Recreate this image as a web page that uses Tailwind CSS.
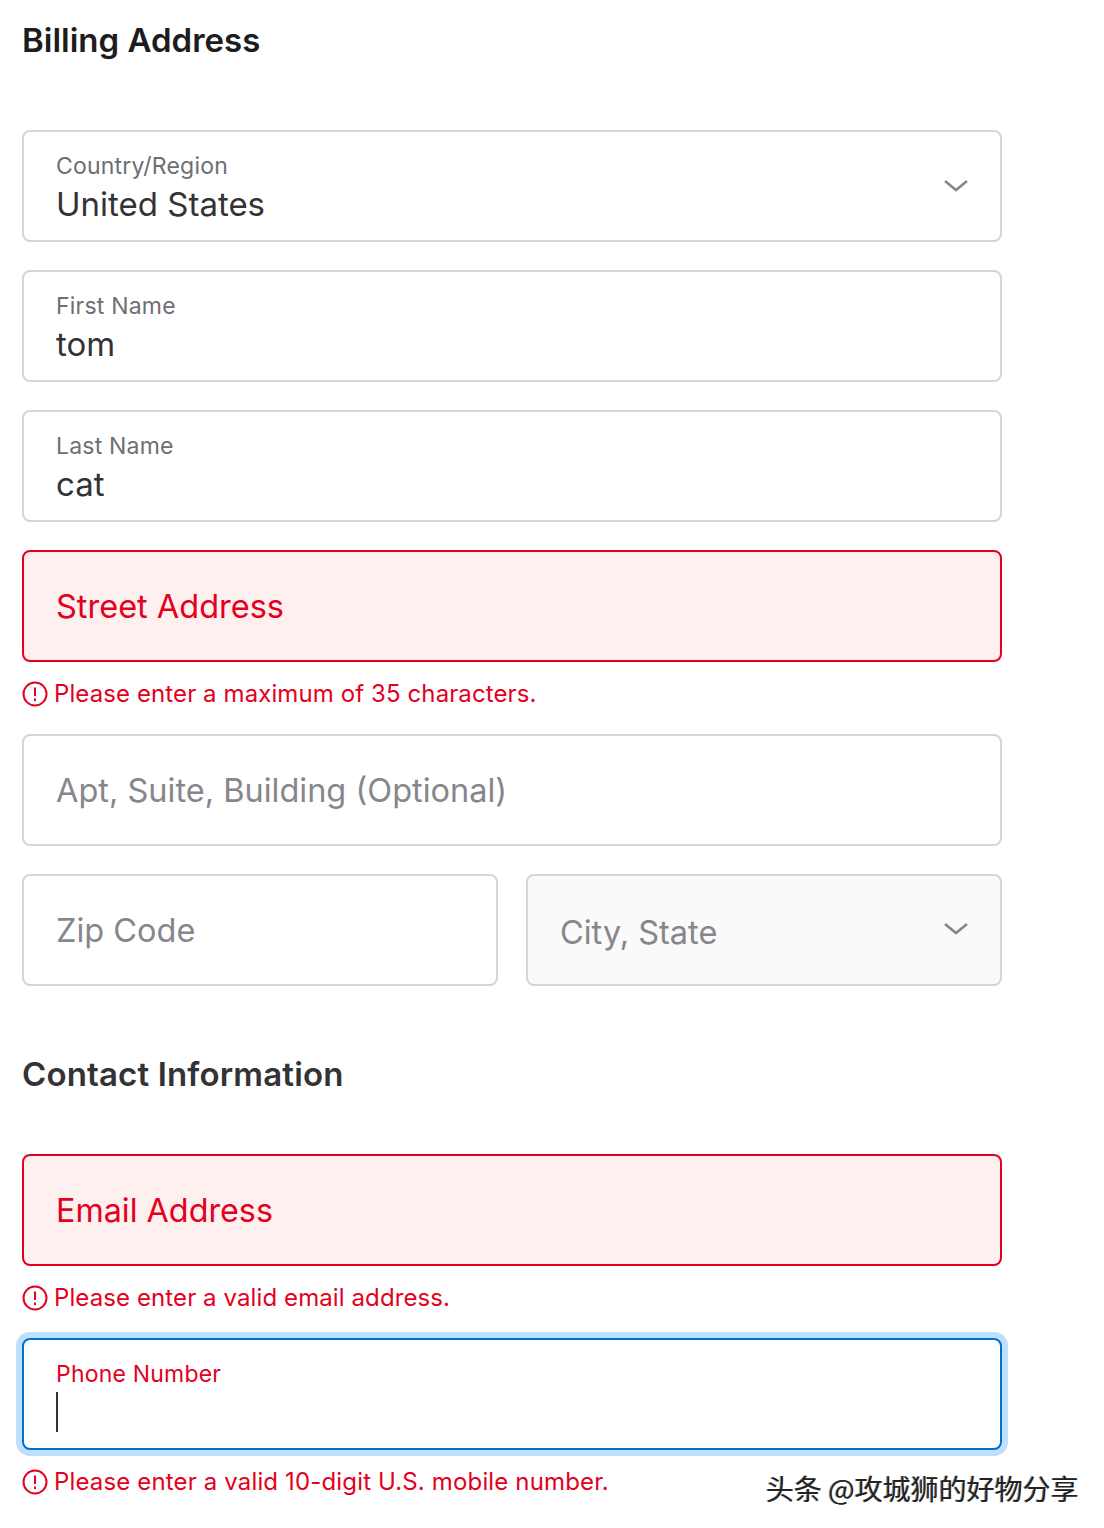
<!DOCTYPE html>
<html lang="en">
<head>
    <meta charset="UTF-8">
    <title>Billing Address</title>
    <script src="https://cdn.jsdelivr.net/npm/@tailwindcss/browser@4"></script>
</head>
<body class="bg-white font-['Inter',sans-serif] text-[#333336]">
    <div class="relative h-[1528px] w-[1104px] overflow-hidden pl-[22px]">
        <div class="w-[980px]">
            <h2 class="flex h-[80px] items-center text-[33px] leading-none font-semibold text-[#1d1d1f]">Billing Address</h2>

            <div class="mt-[50px] flex flex-col gap-[28px]">
                <div class="relative h-[112px] rounded-[8px] border-2 border-[#d6d6d6] bg-white px-[32px] pt-[20px]">
                    <div class="text-[23px] leading-[28px] tracking-[0.2px] text-[#6e6e73]">Country/Region</div>
                    <div class="mt-[4px] text-[33px] leading-[40px] text-[#333336]">United States</div>
                    <svg class="absolute top-[46px] right-[32px]" width="24" height="16" viewBox="0 0 24 16" fill="none" stroke="#86868b" stroke-width="2.6"><path d="M1 3l11 9 11-9"/></svg>
                </div>
                <div class="h-[112px] rounded-[8px] border-2 border-[#d6d6d6] bg-white px-[32px] pt-[20px]">
                    <div class="text-[23px] leading-[28px] tracking-[0.2px] text-[#6e6e73]">First Name</div>
                    <div class="mt-[4px] text-[33px] leading-[40px] text-[#333336]">tom</div>
                </div>
                <div class="h-[112px] rounded-[8px] border-2 border-[#d6d6d6] bg-white px-[32px] pt-[20px]">
                    <div class="text-[23px] leading-[28px] tracking-[0.2px] text-[#6e6e73]">Last Name</div>
                    <div class="mt-[4px] text-[33px] leading-[40px] text-[#333336]">cat</div>
                </div>
                <div>
                    <div class="flex h-[112px] items-center rounded-[8px] border-2 border-[#e30020] bg-[#fff0f0] px-[32px] pt-[3px] text-[32.5px] text-[#e30020]">Street Address</div>
                    <div class="mt-[18px] flex h-[28px] items-center gap-[6px] text-[24px] tracking-[0.1px] text-[#e30020]">
                        <svg width="26" height="26" viewBox="0 0 26 26" fill="none" stroke="#e30020" stroke-width="2"><circle cx="13" cy="13" r="11.5"/><path d="M13 6.5v8.5M13 17.5v2.5"/></svg>
                        <span>Please enter a maximum of 35 characters.</span>
                    </div>
                </div>
                <div class="-mt-[2px] flex h-[112px] items-center rounded-[8px] border-2 border-[#d6d6d6] bg-white px-[32px] pt-[3px] text-[32.5px] text-[#86868b]">Apt, Suite, Building (Optional)</div>
                <div class="grid grid-cols-2 gap-[28px]">
                    <div class="flex h-[112px] items-center rounded-[8px] border-2 border-[#d6d6d6] bg-white px-[32px] pt-[3px] text-[32.5px] text-[#86868b]">Zip Code</div>
                    <div class="relative flex h-[112px] items-center rounded-[8px] border-2 border-[#d6d6d6] bg-[#fafafa] px-[32px] pt-[7px] text-[32.5px] text-[#86868b]">
                        City, State
                        <svg class="absolute top-[46px] right-[32px]" width="24" height="16" viewBox="0 0 24 16" fill="none" stroke="#86868b" stroke-width="2.6"><path d="M1 2l11 9 11-9"/></svg>
                    </div>
                </div>
            </div>

            <h2 class="mt-[68px] flex h-[40px] items-center text-[33px] leading-none font-semibold tracking-[0.15px] text-[#333336]">Contact Information</h2>

            <div class="mt-[60px]">
                <div class="flex h-[112px] items-center rounded-[8px] border-2 border-[#e30020] bg-[#fff0f0] px-[32px] pt-[3px] text-[32.3px] text-[#e30020]">Email Address</div>
                <div class="mt-[18px] flex h-[28px] items-center gap-[6px] text-[24px] tracking-[0.1px] text-[#e30020]">
                    <svg width="26" height="26" viewBox="0 0 26 26" fill="none" stroke="#e30020" stroke-width="2"><circle cx="13" cy="13" r="11.5"/><path d="M13 6.5v8.5M13 17.5v2.5"/></svg>
                    <span>Please enter a valid email address.</span>
                </div>
            </div>

            <div class="mt-[26px]">
                <div class="h-[112px] rounded-[8px] border-2 border-[#0070c9] bg-white px-[32px] pt-[20px] shadow-[0_0_0_6px_#bfdffc]">
                    <div class="text-[23px] leading-[28px] tracking-[0.2px] text-[#e30020]">Phone Number</div>
                    <div class="mt-[4px] h-[40px] w-[2px] bg-[#333336]"></div>
                </div>
                <div class="mt-[18px] flex h-[28px] items-center gap-[6px] text-[24px] tracking-[0.15px] text-[#e30020]">
                    <svg width="26" height="26" viewBox="0 0 26 26" fill="none" stroke="#e30020" stroke-width="2"><circle cx="13" cy="13" r="11.5"/><path d="M13 6.5v8.5M13 17.5v2.5"/></svg>
                    <span>Please enter a valid 10-digit U.S. mobile number.</span>
                </div>
            </div>
        </div>

        <div class="absolute top-[1471px] left-[766px] font-['Noto_Sans_CJK_SC',sans-serif] text-[28px] leading-[34px] text-[#222] [text-shadow:1px_1px_0_#fff,-1px_0_0_#999]">头条 @攻城狮的好物分享</div>
    </div>
</body>
</html>
